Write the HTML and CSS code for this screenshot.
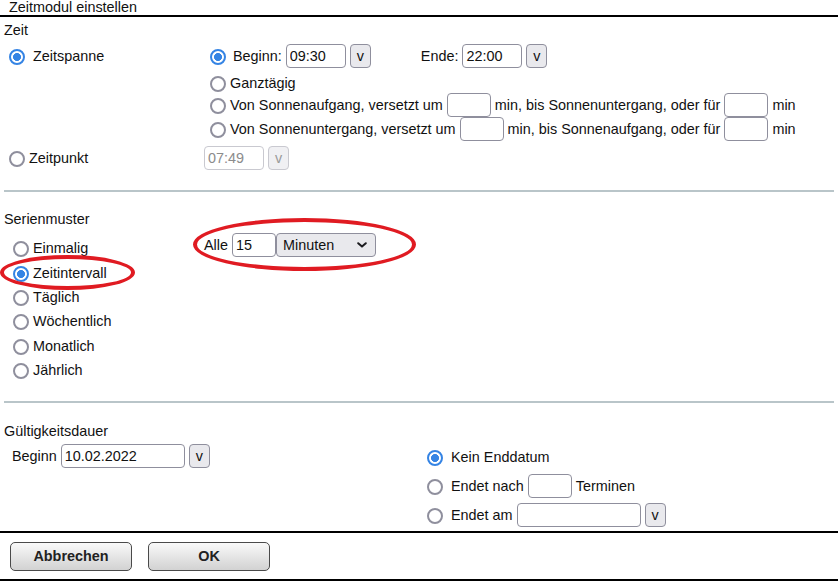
FILE: index.html
```html
<!DOCTYPE html>
<html lang="de">
<head>
<meta charset="utf-8">
<title>Zeitmodul einstellen</title>
<link rel="stylesheet" href="styles.css">
</head>
<body>
<div class="dialog">
  <header class="title">Zeitmodul einstellen</header>

  <section class="section zeit">
    <div class="section-label">Zeit</div>
    <div class="zeit-grid">
      <label class="row main-opt">
        <input type="radio" class="radio r-main" name="zeit" checked>
        <span>Zeitspanne</span>
      </label>
      <div class="span-opts">
        <div class="row">
          <input type="radio" class="radio r-wide" name="span" checked>
          <span>Beginn:</span>
          <input class="field w60" type="text" value="09:30">
          <button class="pick">v</button>
          <span class="ende">Ende:</span>
          <input class="field w60" type="text" value="22:00">
          <button class="pick">v</button>
        </div>
        <label class="row row-ganz">
          <input type="radio" class="radio" name="span">
          <span>Ganztägig</span>
        </label>
        <div class="row">
          <input type="radio" class="radio" name="span">
          <span>Von Sonnenaufgang, versetzt um</span>
          <input class="field w44" type="text">
          <span>min, bis Sonnenuntergang, oder für</span>
          <input class="field w44" type="text">
          <span>min</span>
        </div>
        <div class="row">
          <input type="radio" class="radio" name="span">
          <span>Von Sonnenuntergang, versetzt um</span>
          <input class="field w44" type="text">
          <span>min, bis Sonnenaufgang, oder für</span>
          <input class="field w44" type="text">
          <span>min</span>
        </div>
      </div>
    </div>
    <div class="row zeitpunkt">
      <label class="zp-label">
        <input type="radio" class="radio r-zp" name="zeit">
        <span>Zeitpunkt</span>
      </label>
      <input class="field w60" type="text" value="07:49" disabled>
      <button class="pick" disabled>v</button>
    </div>
  </section>

  <hr class="sep">

  <section class="section serien">
    <div class="section-label">Serienmuster</div>
    <div class="serien-grid">
      <div class="serien-list">
        <label class="srow"><input type="radio" class="radio r-serie" name="serie"><span>Einmalig</span></label>
        <label class="srow"><input type="radio" class="radio r-serie" name="serie" checked><span>Zeitintervall</span></label>
        <label class="srow"><input type="radio" class="radio r-serie" name="serie"><span>Täglich</span></label>
        <label class="srow"><input type="radio" class="radio r-serie" name="serie"><span>Wöchentlich</span></label>
        <label class="srow"><input type="radio" class="radio r-serie" name="serie"><span>Monatlich</span></label>
        <label class="srow"><input type="radio" class="radio r-serie" name="serie"><span>Jährlich</span></label>
      </div>
      <div class="row alle-row">
        <span>Alle</span>
        <input class="field w44" type="text" value="15">
        <button class="select">
          <span>Minuten</span>
          <svg class="chev" width="10" height="6" viewBox="0 0 10 6"><path d="M1.2 1.2 L5 4.6 L8.8 1.2" fill="none" stroke="#1b1b1f" stroke-width="2" stroke-linecap="round" stroke-linejoin="round"/></svg>
        </button>
      </div>
    </div>
    <div class="ellipse e-intervall"></div>
    <div class="ellipse e-alle"></div>
  </section>

  <hr class="sep sep2">

  <section class="section gueltig">
    <div class="section-label">Gültigkeitsdauer</div>
    <div class="gueltig-grid">
      <div class="row beginn-row">
        <span>Beginn</span>
        <input class="field w124" type="text" value="10.02.2022">
        <button class="pick">v</button>
      </div>
      <div class="end-opts">
        <label class="row">
          <input type="radio" class="radio r-end" name="ende" checked>
          <span>Kein Enddatum</span>
        </label>
        <div class="row">
          <input type="radio" class="radio r-end" name="ende">
          <span>Endet nach</span>
          <input class="field w44" type="text">
          <span>Terminen</span>
        </div>
        <div class="row">
          <input type="radio" class="radio r-end" name="ende">
          <span>Endet am</span>
          <input class="field w124" type="text">
          <button class="pick">v</button>
        </div>
      </div>
    </div>
  </section>

  <footer class="footer">
    <button class="action">Abbrechen</button>
    <button class="action">OK</button>
  </footer>
</div>
</body>
</html>
```

FILE: styles.css
```css
html, body {
  margin: 0;
  padding: 0;
  background: #fff;
}

body {
  font-family: "Liberation Sans", Arial, sans-serif;
  font-size: 14.4px;
  color: #111;
  width: 838px;
  overflow: hidden;
}

.dialog {
  width: 838px;
}

.title {
  height: 15px;
  line-height: 14px;
  padding-left: 9px;
  border-bottom: 2px solid #000;
  white-space: nowrap;
}

.section {
  position: relative;
  padding: 0 4px;
}

.section-label {
  line-height: 16px;
  height: 16px;
}

.row {
  display: flex;
  align-items: center;
  gap: 4px;
  height: 24px;
  white-space: nowrap;
}

/* radios */
.radio {
  appearance: none;
  -webkit-appearance: none;
  box-sizing: border-box;
  width: 16px;
  height: 16px;
  margin: 2px 0 0;
  flex: none;
  border: 2px solid #8f8f9d;
  border-radius: 50%;
  background: #fff;
}

.radio:checked {
  border-color: #3584e4;
  background: radial-gradient(circle closest-side, #3584e4 0 62%, #fff 70%);
}

.r-main { margin-left: 5px; margin-right: 4px; }
.r-wide { margin-right: 3px; }
.r-zp { margin-left: 5px; }
.r-serie { margin-left: 9px; }
.r-end { margin-right: 4px; }

/* text fields and buttons */
.field {
  box-sizing: border-box;
  height: 24px;
  margin: 0;
  padding: 0 3px;
  border: 1px solid #8f8f9d;
  border-radius: 4px;
  background: #fff;
  font: inherit;
  color: #111;
  flex: none;
}

.field:disabled {
  border-color: #c9c9d0;
  color: #8c8c8c;
  background: #fff;
}

.w44 { width: 44px; }
.w60 { width: 60px; }
.w124 { width: 124px; }

.pick {
  box-sizing: border-box;
  width: 21px;
  height: 24px;
  margin: 0;
  padding: 0;
  border: 1px solid #8f8f9d;
  border-radius: 4px;
  background: #e9e9ed;
  font: inherit;
  color: #111;
  flex: none;
}

.pick:disabled {
  border-color: #c9c9d0;
  color: #9a9a9a;
  background: #f0f0f3;
}

/* Zeit */
.zeit {
  padding-top: 5px;
}

.zeit-grid {
  display: grid;
  grid-template-columns: 206px 1fr;
  margin-top: 6px;
}

.main-opt {
  align-self: start;
}

.ende {
  margin-left: 46px;
}

.row-ganz {
  height: 21px;
  margin-top: 4px;
}

.zeitpunkt {
  margin-top: 5px;
}

.zp-label {
  display: flex;
  align-items: center;
  gap: 4px;
  width: 196px;
  flex: none;
}

.sep {
  border: 0;
  height: 2px;
  background: #b9c5c9;
  margin: 20px 4px 0;
}

.sep2 {
  margin-top: 18.6px;
}

/* Serienmuster */
.serien {
  padding-top: 19px;
}

.serien-grid {
  display: grid;
  grid-template-columns: 200px 1fr;
  margin-top: 6px;
  align-items: start;
}

.serien-list {
  padding-top: 3px;
}

.srow {
  display: flex;
  align-items: center;
  gap: 4px;
  height: 24.4px;
}

.alle-row {
  gap: 0;
}

.alle-row > span {
  margin-right: 4px;
}

.select {
  box-sizing: border-box;
  width: 100px;
  height: 24px;
  margin: 0;
  padding: 0 8px 0 6px;
  display: flex;
  align-items: center;
  justify-content: space-between;
  border: 1px solid #8f8f9d;
  border-radius: 4px;
  background: #e9e9ed;
  font: inherit;
  color: #111;
}

.chev {
  display: block;
}

.ellipse {
  position: absolute;
  box-sizing: border-box;
  border: 4px solid #e01b22;
  border-radius: 50%;
  pointer-events: none;
}

.e-intervall {
  left: 0;
  top: 63px;
  width: 135px;
  height: 35px;
}

.e-alle {
  left: 193px;
  top: 26px;
  width: 223px;
  height: 53px;
}

/* Gültigkeitsdauer */
.gueltig {
  padding-top: 20px;
}

.gueltig-grid {
  display: grid;
  grid-template-columns: 423px 1fr;
  margin-top: 5px;
  align-items: start;
}

.beginn-row {
  padding-left: 8px;
}

.end-opts {
  display: flex;
  flex-direction: column;
  gap: 5px;
  padding-top: 1px;
}

/* Footer */
.footer {
  display: flex;
  gap: 16px;
  margin-top: 4px;
  padding: 9px 10px 8px;
  border-top: 2px solid #000;
  border-bottom: 2px solid #000;
}

.action {
  box-sizing: border-box;
  width: 122px;
  height: 29px;
  margin: 0;
  border: 1px solid #4a4a4a;
  border-radius: 5px;
  background: linear-gradient(#f9f9f9, #d2d2d2);
  font-family: "Liberation Sans", Arial, sans-serif;
  font-size: 14.4px;
  font-weight: bold;
  color: #222;
}
```
